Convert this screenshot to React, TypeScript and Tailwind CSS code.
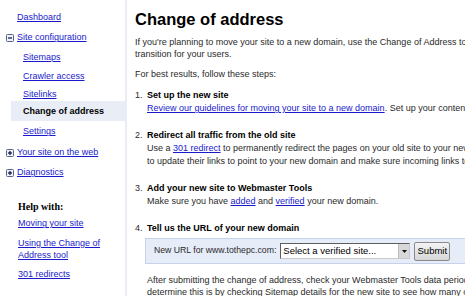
import type { ReactNode } from "react";

const link = "text-[#1a1acc] underline";

function BoxIcon({ plus }: { plus?: boolean }) {
  return (
    <svg width="8" height="8" viewBox="0 0 8 8" className="shrink-0">
      <rect x="0.5" y="0.5" width="7" height="7" rx="1" fill="#eef1f8" stroke="#56648c" />
      <path d="M2 4h4" stroke="#101040" strokeWidth="1.2" />
      {plus && <path d="M4 2v4" stroke="#101040" strokeWidth="1.2" />}
    </svg>
  );
}

function Step({ n, title, children }: { n: string; title: string; children?: ReactNode }) {
  return (
    <li className="flex">
      <span className="w-[12px] shrink-0 text-[9px] leading-[13px]">{n}.</span>
      <div className="flex flex-col">
        <div className="text-[9px] leading-[13px] font-bold text-black">{title}</div>
        {children}
      </div>
    </li>
  );
}

export default function App() {
  return (
    <div
      className="w-[465px] h-[296px] overflow-hidden bg-white flex"
      style={{ fontFamily: '"Liberation Sans", Arial, sans-serif' }}
    >
      {/* Left nav */}
      <aside className="w-[127px] shrink-0 border-r-2 border-[#e8edf6] pt-[8px] text-[9px] whitespace-nowrap">
        <div className="h-[20px] flex items-center pl-[17px]">
          <a className={link}>Dashboard</a>
        </div>
        <div className="h-[20px] flex items-center pl-[6px] gap-[3px]">
          <BoxIcon />
          <a className={link}>Site configuration</a>
        </div>
        <div className="h-[19px] flex items-center pl-[23px]">
          <a className={link}>Sitemaps</a>
        </div>
        <div className="h-[20px] flex items-center pl-[23px]">
          <a className={link}>Crawler access</a>
        </div>
        <div className="h-[14px] flex items-end pl-[23px]">
          <a className={link}>Sitelinks</a>
        </div>
        <div className="ml-[11px] h-[20px] pt-[2px] flex items-center pl-[12px] bg-[#e8edf6] font-bold text-black">
          Change of address
        </div>
        <div className="h-[22px] flex items-center pl-[23px]">
          <a className={link}>Settings</a>
        </div>
        <div className="h-[20px] flex items-center pl-[6px] gap-[3px]">
          <BoxIcon plus />
          <a className={link}>Your site on the web</a>
        </div>
        <div className="h-[20px] flex items-center pl-[6px] gap-[3px]">
          <BoxIcon plus />
          <a className={link}>Diagnostics</a>
        </div>

        <div
          className="mt-[13px] h-[20px] flex items-center pl-[18px] text-[10px] font-bold text-black"
          style={{ fontFamily: '"Liberation Serif", "Times New Roman", serif' }}
        >
          Help with:
        </div>
        <div className="h-[16px] flex items-center pl-[18px]">
          <a className={link}>Moving your site</a>
        </div>
        <div className="mt-[5px] pl-[18px] leading-[12px]">
          <a className={link}>
            Using the Change of
            <br />
            Address tool
          </a>
        </div>
        <div className="mt-[4px] h-[20px] flex items-center pl-[18px]">
          <a className={link}>301 redirects</a>
        </div>
      </aside>

      {/* Content */}
      <main className="flex-1 min-w-0 pl-[8px] text-[9px] text-[#2a2a2a] whitespace-nowrap overflow-hidden">
        <h1 className="pt-[9px] text-[16.5px] leading-[20px] font-bold text-black">Change of address</h1>
        <div className="mt-[7px] leading-[12px]">
          <div>
            If you're planning to move your site to a new domain, use the Change of Address tool to tell Google about
            your new URL. This will help us update our index faster and smooth the
          </div>
          <div>transition for your users.</div>
        </div>
        <div className="mt-[8px] leading-[12px]">For best results, follow these steps:</div>

        <ol className="mt-[9px] flex flex-col gap-[14px]">
          <Step n="1" title="Set up the new site">
            <div className="leading-[13px]">
              <a className={link}>Review our guidelines for moving your site to a new domain</a>. Set up your content on
              the new domain and make sure it is accessible.
            </div>
          </Step>
          <Step n="2" title="Redirect all traffic from the old site">
            <div className="leading-[13px]">
              Use a <a className={link}>301 redirect</a> to permanently redirect the pages on your old site to your new
              site. Contact sites that link to your old domain and ask them
            </div>
            <div className="leading-[13px]">
              to update their links to point to your new domain and make sure incoming links to your old site redirect.
            </div>
          </Step>
          <Step n="3" title="Add your new site to Webmaster Tools">
            <div className="leading-[13px]">
              Make sure you have <a className={link}>added</a> and <a className={link}>verified</a> your new domain.
            </div>
          </Step>
          <Step n="4" title="Tell us the URL of your new domain">
            <div className="mt-[3px] -ml-[2px] w-[340px] h-[26px] flex items-center pl-[8px] border border-[#c5d2ea] bg-[#e6ecf8]">
              <span className="text-[8.7px]">New URL for www.tothepc.com:</span>
              <div className="ml-[4px] w-[130px] h-[16px] flex items-center border border-[#5d5d5d] border-r-[#c8c8c8] border-b-[#c8c8c8] bg-white">
                <span className="flex-1 pl-[2px] text-[9.5px] text-black">Select a verified site...</span>
                <span className="w-[11px] h-[14px] flex items-center justify-center bg-[#d8d8d8] border-l border-[#bcbcbc]">
                  <svg width="5" height="3" viewBox="0 0 5 3">
                    <path d="M0 0h5L2.5 3z" fill="#111" />
                  </svg>
                </span>
              </div>
              <button className="ml-[4px] h-[19px] w-[36px] text-[9.5px] text-black rounded-[2px] border border-[#8a8a8a] bg-gradient-to-b from-[#f4f4f4] to-[#d6d6d6]">
                Submit
              </button>
            </div>
            <div className="mt-[10px] leading-[12px]">
              After submitting the change of address, check your Webmaster Tools data periodically to make sure it is
              working.
            </div>
            <div className="leading-[12px]">
              determine this is by checking Sitemap details for the new site to see how many of your URLs are indexed.
            </div>
          </Step>
        </ol>
      </main>
    </div>
  );
}
